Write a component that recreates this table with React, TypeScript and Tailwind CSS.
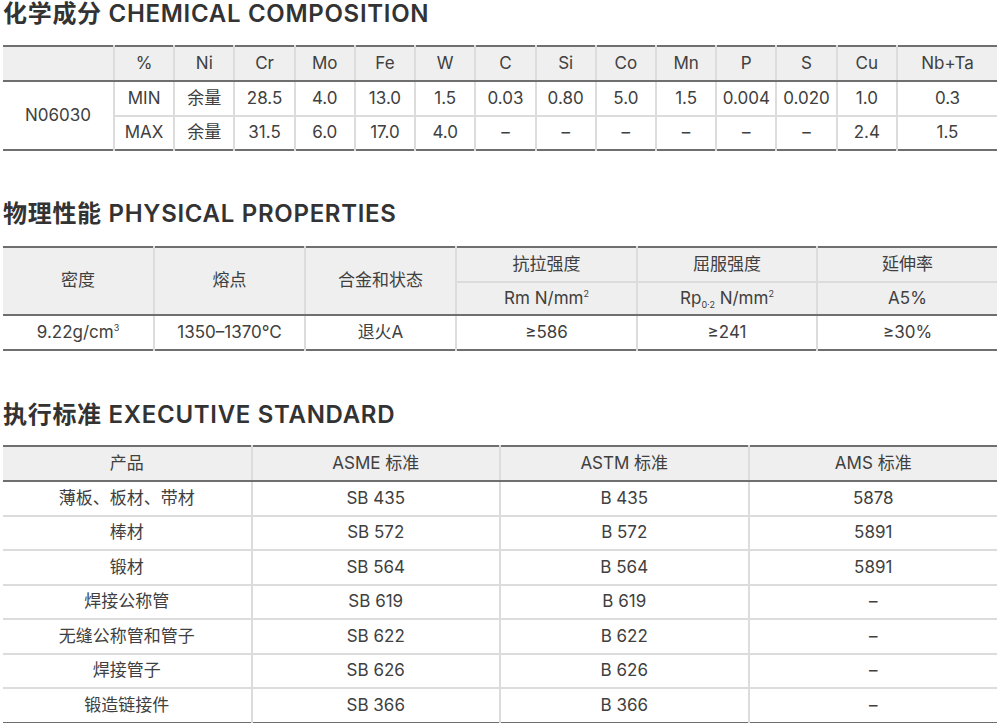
import type { ReactNode } from 'react';

const DARK = 'border-[#6f6f6f]';
const font = { fontFamily: 'Inter, "Noto Sans CJK SC", sans-serif' };

interface CellProps {
  children?: ReactNode;
  left?: boolean;
  bottom?: 'dark' | 'light';
  rowSpan?: number;
  className?: string;
}

function Cell({ children, left = true, bottom, rowSpan, className = '' }: CellProps) {
  const b =
    bottom === 'dark'
      ? 'border-b-2 border-b-[#6f6f6f]'
      : bottom === 'light'
        ? 'border-b-2 border-b-[#dcdcdc]'
        : '';
  return (
    <td
      rowSpan={rowSpan}
      className={`p-0 text-center align-middle whitespace-nowrap ${left ? 'border-l-2 border-l-[#dcdcdc]' : ''} ${b} ${className}`}
    >
      {children}
    </td>
  );
}

function Title({ cn, en, className = '' }: { cn: string; en: string; className?: string }) {
  return (
    <h2 className={`text-[24px] leading-[28px] font-semibold tracking-[0.7px] text-[#333] ${className}`}>
      {cn} {en}
    </h2>
  );
}

const elements = ['%', 'Ni', 'Cr', 'Mo', 'Fe', 'W', 'C', 'Si', 'Co', 'Mn', 'P', 'S', 'Cu', 'Nb+Ta'];
const minRow = ['MIN', '余量', '28.5', '4.0', '13.0', '1.5', '0.03', '0.80', '5.0', '1.5', '0.004', '0.020', '1.0', '0.3'];
const maxRow = ['MAX', '余量', '31.5', '6.0', '17.0', '4.0', '–', '–', '–', '–', '–', '–', '2.4', '1.5'];

const standards = [
  ['薄板、板材、带材', 'SB 435', 'B 435', '5878'],
  ['棒材', 'SB 572', 'B 572', '5891'],
  ['锻材', 'SB 564', 'B 564', '5891'],
  ['焊接公称管', 'SB 619', 'B 619', '–'],
  ['无缝公称管和管子', 'SB 622', 'B 622', '–'],
  ['焊接管子', 'SB 626', 'B 626', '–'],
  ['锻造链接件', 'SB 366', 'B 366', '–'],
];

function Sup({ children }: { children: ReactNode }) {
  return <span className="relative -top-[7px] text-[9px] leading-none">{children}</span>;
}

export default function App() {
  return (
    <div className="w-[1000px] bg-white px-[3px] text-[17px] text-[#404040]" style={font}>
      <Title cn="化学成分" en="CHEMICAL COMPOSITION" className="mb-[17px]" />
      <table className={`w-full table-fixed border-collapse border-y-2 ${DARK}`}>
        <colgroup>
          <col className="w-[111px]" />
          {elements.slice(0, 13).map((e) => (
            <col key={e} />
          ))}
          <col className="w-[100px]" />
        </colgroup>
        <tbody>
          <tr className="h-[35px] bg-[#efefef]">
            <Cell left={false} bottom="dark" />
            {elements.map((e) => (
              <Cell key={e} bottom="dark">{e}</Cell>
            ))}
          </tr>
          <tr className="h-[35px]">
            <Cell left={false} rowSpan={2}>N06030</Cell>
            {minRow.map((v, i) => (
              <Cell key={i} bottom="light">{v}</Cell>
            ))}
          </tr>
          <tr className="h-[34px]">
            {maxRow.map((v, i) => (
              <Cell key={i}>{v}</Cell>
            ))}
          </tr>
        </tbody>
      </table>

      <Title cn="物理性能" en="PHYSICAL PROPERTIES" className="mt-[49px] mb-[18px]" />
      <table className={`w-full table-fixed border-collapse border-y-2 ${DARK}`}>
        <colgroup>
          <col className="w-[151px]" />
          <col className="w-[151px]" />
          <col className="w-[151px]" />
          <col className="w-[181px]" />
          <col className="w-[180px]" />
          <col className="w-[180px]" />
        </colgroup>
        <tbody>
          <tr className="h-[35px] bg-[#efefef]">
            <Cell left={false} rowSpan={2} bottom="dark">密度</Cell>
            <Cell rowSpan={2} bottom="dark">熔点</Cell>
            <Cell rowSpan={2} bottom="dark">合金和状态</Cell>
            <Cell bottom="light">抗拉强度</Cell>
            <Cell bottom="light">屈服强度</Cell>
            <Cell bottom="light">延伸率</Cell>
          </tr>
          <tr className="h-[33px] bg-[#efefef]">
            <Cell bottom="dark">
              Rm N/mm<Sup>2</Sup>
            </Cell>
            <Cell bottom="dark">
              Rp<span className="relative top-[4px] text-[9px] leading-none">0·2</span> N/mm<Sup>2</Sup>
            </Cell>
            <Cell bottom="dark">A5%</Cell>
          </tr>
          <tr className="h-[35px]">
            <Cell left={false}>
              9.22g/cm<Sup>3</Sup>
            </Cell>
            <Cell>1350–1370℃</Cell>
            <Cell>退火A</Cell>
            <Cell>≥586</Cell>
            <Cell>≥241</Cell>
            <Cell>≥30%</Cell>
          </tr>
        </tbody>
      </table>

      <Title cn="执行标准" en="EXECUTIVE STANDARD" className="mt-[50px] mb-[16px]" />
      <table className={`w-full table-fixed border-collapse border-y-2 ${DARK}`}>
        <tbody>
          <tr className="h-[35px] bg-[#efefef]">
            {['产品', 'ASME 标准', 'ASTM 标准', 'AMS 标准'].map((h, i) => (
              <Cell key={h} left={i > 0} bottom="dark">{h}</Cell>
            ))}
          </tr>
          {standards.map((row, r) => (
            <tr key={r} className="h-[34.5px]">
              {row.map((v, i) => (
                <Cell key={i} left={i > 0} bottom={r < standards.length - 1 ? 'light' : undefined}>
                  {v}
                </Cell>
              ))}
            </tr>
          ))}
        </tbody>
      </table>
    </div>
  );
}
